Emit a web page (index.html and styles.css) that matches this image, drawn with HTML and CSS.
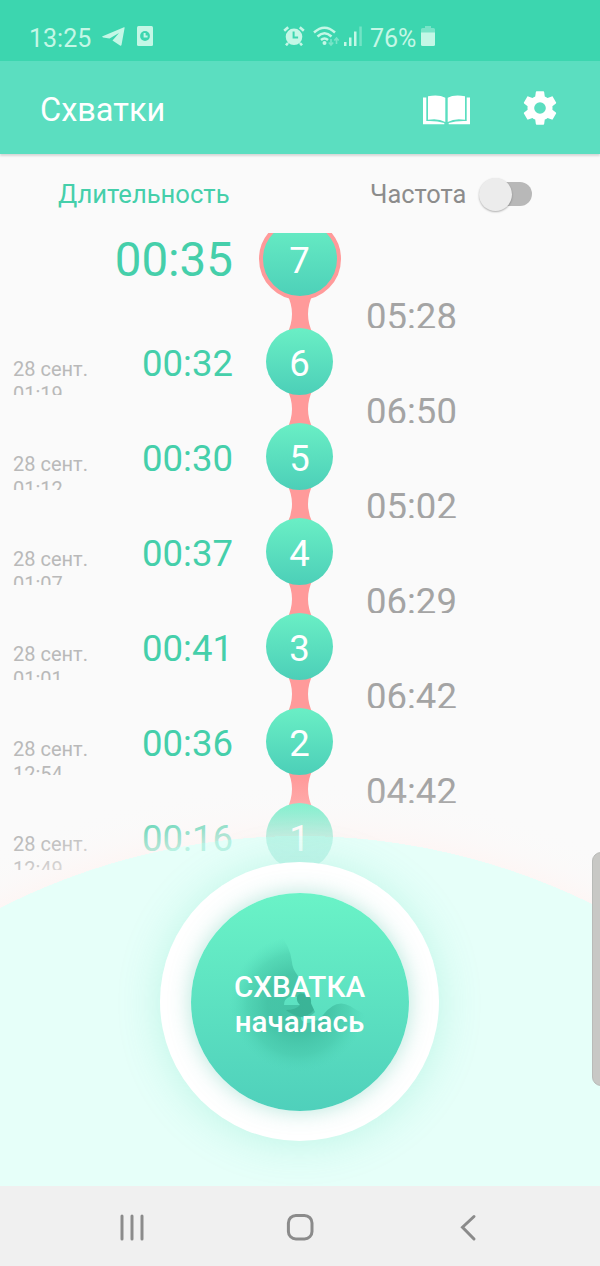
FILE: index.html
```html
<!DOCTYPE html>
<html lang="ru">
<head>
<meta charset="utf-8">
<title>Схватки</title>
<link rel="stylesheet" href="styles.css">
</head>
<body>
<div class="screen">
  <div class="status">
    <span class="clock">13:25</span>
    <svg class="i-plane" width="24" height="20" viewBox="0 0 24 20"><path d="M0 10.500 22 1.300Q22.800 1 22.600 2L19.500 19Q19 20 18 19.400L10.500 14.500 17 7 7.500 12.500 1 11.500Z"/></svg>
    <svg class="i-app" width="16" height="20" viewBox="0 0 16 20"><rect width="16" height="20" rx="1.500"/><circle cx="8" cy="10" r="4.900" class="cut"/><path d="M7.600 7v3.600h3" class="line"/></svg>
    <svg class="i-alarm" width="22" height="20" viewBox="0 0 22 20"><circle cx="11" cy="10.800" r="8.300"/><path d="M5 17 3 19.300M17 17l2 2.300M1.200 4.800 5.200 1.200M20.800 4.800 16.800 1.200" class="line thick"/><path d="M10.600 5.500v6h4.500" class="dark"/></svg>
    <svg class="i-wifi" width="27" height="21" viewBox="0 0 27 21"><path d="M1 6.500Q11.500-3 22 6.500M4.500 10.500Q11.500 4 18.500 10.500M8 14Q11.500 11 15 14" class="line wave"/><circle cx="11.500" cy="17" r="2"/><path d="M18 13v5.500M15.800 16.500 18 19l2.200-2.500M23.500 18v-6M21.300 14.500 23.500 12l2.200 2.500" class="line faint"/></svg>
    <svg class="i-signal" width="18" height="20" viewBox="0 0 18 20"><path d="M0 16h2.500v4H0zM5 11.500h2.500V20H5zM10 5.500h2.500V20H10z"/><path d="M15.300 0.500h2.500V20h-2.500z" opacity=".4"/></svg>
    <span class="percent">76%</span>
    <svg class="i-batt" width="14" height="20" viewBox="0 0 14 20"><path d="M4 0h6v2h2.500Q14 2 14 3.500V7H0V3.500Q0 2 1.500 2H4z" opacity=".45"/><path d="M0 6.500h14v12q0 1.500-1.500 1.500h-11Q0 20 0 18.500z"/></svg>
  </div>

  <header class="appbar">
    <h1 class="title">Схватки</h1>
    <svg class="i-book" width="48" height="30" viewBox="0 0 48 30">
      <path d="M0 2.500h3.300V26q10-.5 18 2v1.200H0zM47 2.500h-3.300V26q-10-.5-18 2v1.200H47z"/>
      <path d="M5 1.200Q16-1 22.300 2.800V27Q15 22.800 5 24.800zM42 1.200Q31-1 24.700 2.800V27Q32 22.800 42 24.800z"/>
    </svg>
    <svg class="i-gear" width="40" height="40" viewBox="0 0 24 24"><path d="M19.430 12.980c.04-.32.07-.64.07-.98s-.03-.66-.07-.98l2.110-1.650c.19-.15.24-.42.12-.64l-2-3.460c-.12-.22-.39-.3-.61-.22l-2.490 1c-.52-.4-1.080-.73-1.690-.98l-.38-2.650C14.460 2.180 14.250 2 14 2h-4c-.25 0-.46.18-.49.42l-.38 2.650c-.61.25-1.170.59-1.690.98l-2.490-1c-.23-.09-.49 0-.61.22l-2 3.460c-.13.22-.07.49.12.64l2.110 1.650c-.04.32-.07.65-.07.98s.03.66.07.98l-2.110 1.650c-.19.15-.24.42-.12.64l2 3.460c.12.22.39.3.61.22l2.490-1c.52.4 1.080.73 1.690.98l.38 2.650c.03.24.24.42.49.42h4c.25 0 .46-.18.49-.42l.38-2.650c.61-.25 1.170-.59 1.690-.98l2.490 1c.23.09.49 0 .61-.22l2-3.460c.12-.22.07-.49-.12-.64zM12 15.500a3.500 3.500 0 1 1 0-7 3.500 3.500 0 0 1 0 7z"/></svg>
  </header>

  <main class="content">
    <svg class="hill" width="600" height="1032" viewBox="0 154 600 1032"><circle cx="300" cy="1497" r="661"/></svg>

    <div class="tabs">
      <span class="tab-duration">Длительность</span>
      <span class="tab-frequency">Частота</span>
      <span class="switch"><span class="knob"></span></span>
    </div>

    <div class="list">
      <div class="row first">
        <span class="date"></span><span class="dur">00:35</span>
        <div class="chain"><span class="dot current">7</span></div>
      </div>
      <div class="row"><span class="date">28 сент.<br>01:19</span><span class="dur">00:32</span><div class="chain"><svg class="link" viewBox="0 0 26 40"><path d="M0 0H26Q16 20 26 40H0Q10 20 0 0Z"/></svg><span class="dot">6</span></div><span class="freq">05:28</span></div>
      <div class="row"><span class="date">28 сент.<br>01:12</span><span class="dur">00:30</span><div class="chain"><svg class="link" viewBox="0 0 26 40"><path d="M0 0H26Q16 20 26 40H0Q10 20 0 0Z"/></svg><span class="dot">5</span></div><span class="freq">06:50</span></div>
      <div class="row"><span class="date">28 сент.<br>01:07</span><span class="dur">00:37</span><div class="chain"><svg class="link" viewBox="0 0 26 40"><path d="M0 0H26Q16 20 26 40H0Q10 20 0 0Z"/></svg><span class="dot">4</span></div><span class="freq">05:02</span></div>
      <div class="row"><span class="date">28 сент.<br>01:01</span><span class="dur">00:41</span><div class="chain"><svg class="link" viewBox="0 0 26 40"><path d="M0 0H26Q16 20 26 40H0Q10 20 0 0Z"/></svg><span class="dot">3</span></div><span class="freq">06:29</span></div>
      <div class="row"><span class="date">28 сент.<br>12:54</span><span class="dur">00:36</span><div class="chain"><svg class="link" viewBox="0 0 26 40"><path d="M0 0H26Q16 20 26 40H0Q10 20 0 0Z"/></svg><span class="dot">2</span></div><span class="freq">06:42</span></div>
      <div class="row"><span class="date">28 сент.<br>12:49</span><span class="dur">00:16</span><div class="chain"><svg class="link" viewBox="0 0 26 40"><path d="M0 0H26Q16 20 26 40H0Q10 20 0 0Z"/></svg><span class="dot">1</span></div><span class="freq">04:42</span></div>
    </div>

    <svg class="haze" width="600" height="1032" viewBox="0 154 600 1032">
      <defs>
        <radialGradient id="glow" gradientUnits="userSpaceOnUse" cx="300" cy="1497" r="720">
          <stop offset=".88" stop-color="#e6fff9" stop-opacity=".8"/>
          <stop offset=".918" stop-color="#e6fff9" stop-opacity=".7"/>
          <stop offset=".918" stop-color="#fff4f2" stop-opacity=".64"/>
          <stop offset=".945" stop-color="#fdf7f6" stop-opacity=".36"/>
          <stop offset=".97" stop-color="#fcf9f8" stop-opacity=".12"/>
          <stop offset="1" stop-color="#fbfafa" stop-opacity="0"/>
        </radialGradient>
      </defs>
      <circle cx="300" cy="1497" r="720" fill="url(#glow)"/>
    </svg>

    <div class="dock">
      <div class="ring">
        <button class="start">
          <svg class="baby" width="218" height="218" viewBox="191 893 218 218">
            <defs>
              <radialGradient id="shade" gradientUnits="userSpaceOnUse" cx="298" cy="1004" r="68">
                <stop offset="0" stop-color="#36b094" stop-opacity=".6"/>
                <stop offset=".45" stop-color="#36b094" stop-opacity=".58"/>
                <stop offset=".75" stop-color="#3cba9c" stop-opacity=".34"/>
                <stop offset="1" stop-color="#4cd2b4" stop-opacity="0"/>
              </radialGradient>
            </defs>
            <path fill="url(#shade)" fill-rule="evenodd" d="M280 935Q290 946 292 962Q292 968 298 976Q301 983 298 991Q302 993 306 993Q312 996 311 1004L315 1012Q309 1019 301 1017Q300 1021 307 1023Q315 1023 323 1015Q336 998 350 1006Q362 1014 374 1016V1075H225V935ZM284 1005Q284 999 289 997Q292 994 297 997Q296 1001 300 1005Z"/>
            <path class="heart" d="M297 997Q299 991 306 995Q312 997 311 1003L314 1010Q309 1016 300 1017Q292 1015 286 1010Q296 1010 300 1005Q296 1001 297 997Z"/>
          </svg>
          <span class="start-text">СХВАТКА<br>началась</span>
        </button>
      </div>
    </div>
    <div class="edge-panel"></div>
  </main>

  <nav class="nav">
    <svg width="168" height="80" viewBox="0 0 168 80"><path d="M74 30v23M84 30v23M94 30v23"/></svg>
    <svg width="168" height="80" viewBox="0 0 168 80"><rect x="72.400" y="29.400" width="23.600" height="23.600" rx="7.500"/></svg>
    <svg width="168" height="80" viewBox="0 0 168 80"><path d="M90 30.500 78.500 41.200 90 53"/></svg>
  </nav>
</div>
</body>
</html>
```

FILE: styles.css
```css
* { box-sizing: border-box; }
body { margin: 0; font-family: Roboto, sans-serif; }
.screen { width: 600px; height: 1266px; display: flex; flex-direction: column; background: #fafafa; overflow: hidden; }

.status { height: 61px; flex: none; background: #3cd6af; display: flex; align-items: flex-start; padding: 26px 0 0 29px; color: #c4f7e6; fill: #c4f7e6; }
.status svg { flex: none; }
.clock, .percent { font-size: 25px; line-height: 25px; }
.clock { width: 73px; }
.i-app { margin-left: 11px; }
.i-alarm { margin-left: 130px; }
.i-wifi { margin-left: 8px; }
.i-signal { margin-left: 4px; }
.percent { margin-left: 8px; width: 51px; }
.status .line { fill: none; stroke: currentColor; stroke-width: 2; }
.status .thick { stroke-width: 2.600; }
.status .wave { stroke-width: 2.500; }
.status .faint { opacity: .45; stroke-width: 1.600; }
.status .cut { fill: #3cd6af; }
.status .dark { fill: none; stroke: #3cd6af; stroke-width: 2; }

.appbar { height: 93px; flex: none; background: #5bdec0; display: flex; align-items: center; padding: 0 40px; box-shadow: 0 2px 2px rgba(0,0,0,.14); z-index: 2; }
.title { margin: 5px 0 0; flex: 1; font-size: 32.500px; font-weight: 400; color: #fff; }
.appbar svg { fill: #fff; }
.i-book { margin-top: 4px; }
.i-gear { margin: 1px 0 0 49px; }

.content { position: relative; flex: 1; overflow: hidden; }
.hill, .haze { position: absolute; left: 0; top: 0; pointer-events: none; }
.hill { fill: #e6fff9; }

.tabs { position: relative; height: 79px; display: flex; align-items: center; padding: 1px 0 0 58px; font-size: 25.600px; line-height: 30px; }
.tab-duration { width: 312px; color: #45cfaa; }
.tab-frequency { width: 110px; color: #8c8c8c; font-size: 25.400px; }
.switch { width: 52px; height: 24px; border-radius: 12px; background: #b8b8b8; display: flex; align-items: center; }
.knob { width: 33px; height: 33px; margin-left: -1px; flex: none; border-radius: 50%; background: #ececec; box-shadow: 0 1px 2px rgba(0,0,0,.3); }

.list { position: relative; height: 637px; overflow: hidden; }
.row { height: 95px; display: grid; grid-template-columns: 110px 123px 133px 1fr; }
.date { height: 95px; overflow: hidden; padding: 57px 0 0 13px; font-size: 20px; line-height: 24.500px; color: #b9b9b9; }
.dur { padding-top: 28px; font-size: 36.500px; line-height: 71px; text-align: right; color: #45cfaa; }
.chain { display: flex; flex-direction: column; align-items: center; }
.link { width: 26px; height: 40px; margin: -6px 0; flex: none; fill: #ff9a9a; }
.dot { position: relative; width: 67px; height: 67px; flex: none; border-radius: 50%; background: linear-gradient(#6aefc5, #4ccfb8); color: #fff; font-size: 36.500px; line-height: 71px; text-align: center; }
.freq { height: 28px; overflow: hidden; font-size: 36.500px; line-height: 33px; color: #a4a4a4; }
.row.first { height: 67px; }
.first .date { padding: 0; height: 67px; }
.first .dur { padding: 0; font-size: 47.500px; line-height: 55px; }
.current { width: 82px; height: 82px; margin-top: -15.500px; border: 4px solid #ff9a9a; background-origin: border-box; line-height: 77px; }

.dock { position: absolute; left: 160px; top: 708px; }
.ring { width: 279px; height: 279px; border-radius: 50%; background: #fff; display: grid; place-items: center; box-shadow: 0 2px 42px rgba(70,214,180,.25); }
.start { width: 218px; height: 218px; padding: 0; border: 0; border-radius: 50%; background: linear-gradient(#6af3c7, #4fd0bb); box-shadow: 0 0 22px rgba(60,190,160,.38); display: grid; place-items: center; font-family: inherit; color: #fff; }
.baby, .start-text { grid-area: 1 / 1; }
.heart { fill: #2fa388; opacity: .5; }
.start-text { position: relative; font-size: 29.600px; line-height: 35px; font-weight: 500; padding-top: 6px; }
.edge-panel { position: absolute; right: -10px; top: 698px; width: 18px; height: 234px; border-radius: 9px; background: #c8c8c5; border: 1px solid #b9bbb8; }

.nav { height: 80px; flex: none; background: #f0f0f0; display: flex; justify-content: center; fill: none; stroke: #8b8b8b; stroke-width: 3; stroke-linecap: round; }
```
